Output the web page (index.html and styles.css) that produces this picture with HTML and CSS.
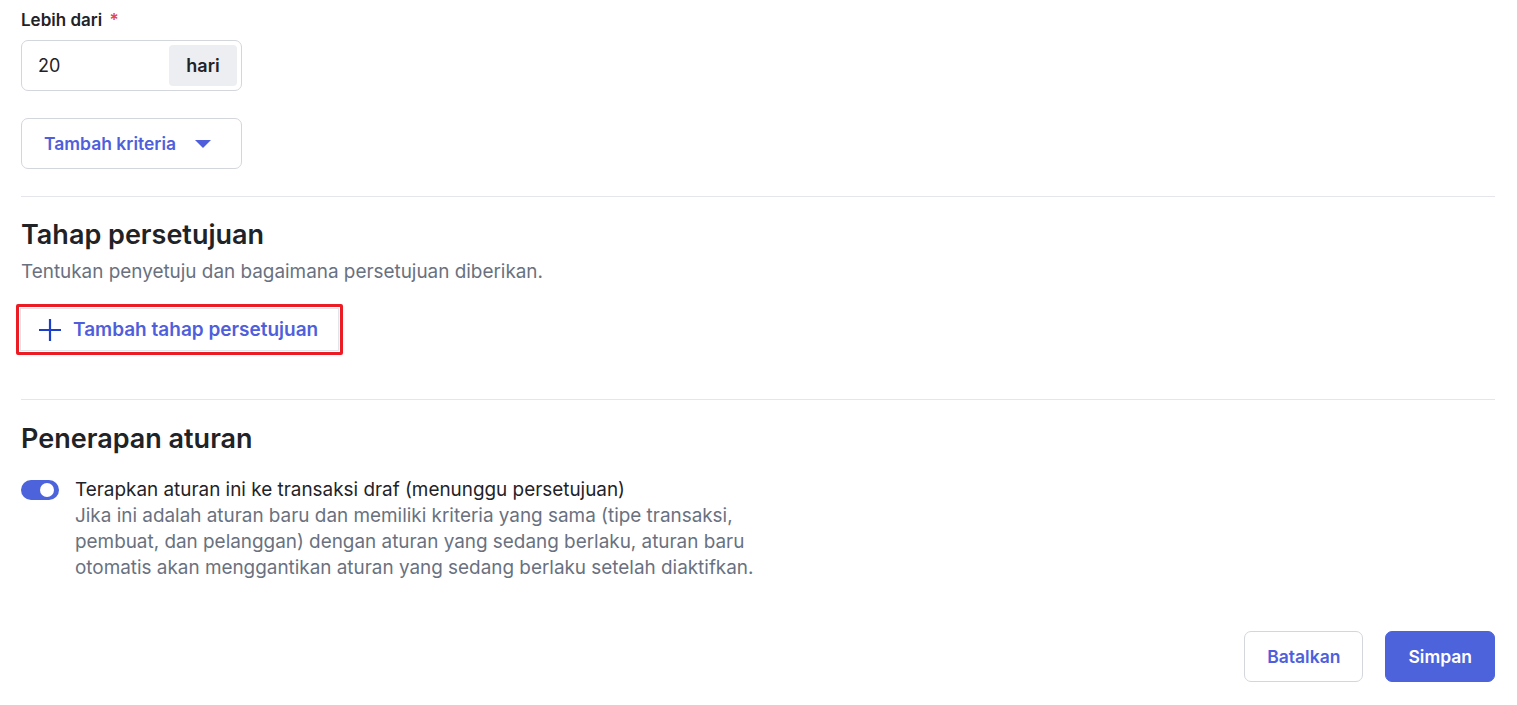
FILE: index.html
```html
<!DOCTYPE html>
<html lang="id">
<head>
<meta charset="utf-8">
<link rel="stylesheet" href="styles.css">
</head>
<body>
<div class="page">
  <section class="criteria">
    <label class="field-label">Lebih dari <span class="req">*</span></label>
    <div class="input-group">
      <span class="input-value">20</span>
      <span class="input-suffix">hari</span>
    </div>
    <button class="dropdown-btn">Tambah kriteria
      <svg class="caret" width="18" height="10" viewBox="0 0 18 10"><path d="M1 1h16L9 9z" fill="#4f5fdc"/></svg>
    </button>
  </section>

  <hr class="divider">

  <section class="stage">
    <h2 class="section-title">Tahap persetujuan</h2>
    <p class="section-desc">Tentukan penyetuju dan bagaimana persetujuan diberikan.</p>
    <div class="highlight">
      <button class="add-btn">
        <svg width="24" height="24" viewBox="0 0 24 24"><path d="M12 1v22M1 12h22" stroke="#1b3fc9" stroke-width="2.2" fill="none"/></svg>
        <span>Tambah tahap persetujuan</span>
      </button>
    </div>
  </section>

  <hr class="divider second">

  <section class="apply">
    <h2 class="section-title">Penerapan aturan</h2>
    <div class="toggle-row">
      <span class="toggle"><span class="knob"></span></span>
      <div class="toggle-text">
        <div class="toggle-label">Terapkan aturan ini ke transaksi draf (menunggu persetujuan)</div>
        <div class="toggle-help">Jika ini adalah aturan baru dan memiliki kriteria yang sama (tipe transaksi, pembuat, dan pelanggan) dengan aturan yang sedang berlaku, aturan baru otomatis akan menggantikan aturan yang sedang berlaku setelah diaktifkan.</div>
      </div>
    </div>
  </section>

  <div class="actions">
    <button class="btn btn-outline">Batalkan</button>
    <button class="btn btn-primary">Simpan</button>
  </div>
</div>
</body>
</html>
```

FILE: styles.css
```css
* { box-sizing: border-box; }
html, body { margin: 0; padding: 0; background: #fff; }
body {
  font-family: Inter, "Noto Sans", sans-serif;
  color: #1f2328;
}
.page {
  width: 1517px;
  padding: 10px 22px 0 21px;
}
.criteria { display: flex; flex-direction: column; align-items: flex-start; }
.field-label {
  font-size: 17px;
  font-weight: 600;
  line-height: 20px;
  color: #1f2328;
}
.req { color: #e5484d; margin-left: 3px; }
.input-group {
  margin-top: 10px;
  width: 221px;
  height: 51px;
  border: 1px solid #d3d6dd;
  border-radius: 7px;
  display: flex;
  align-items: stretch;
  padding: 4px 4px 4px 16px;
}
.input-value {
  flex: 1;
  display: flex;
  align-items: center;
  font-size: 18px;
  color: #1f2328;
}
.input-suffix {
  width: 68px;
  background: #eceef1;
  border-radius: 4px;
  display: flex;
  align-items: center;
  justify-content: center;
  font-size: 18px;
  font-weight: 600;
  color: #1f2328;
}
.dropdown-btn {
  margin-top: 27px;
  width: 221px;
  height: 51px;
  border: 1px solid #d3d6dd;
  border-radius: 7px;
  background: #fff;
  display: flex;
  align-items: center;
  gap: 18px;
  padding: 0 0 0 22px;
  font-family: inherit;
  font-size: 17.5px;
  font-weight: 600;
  color: #4f5fdc;
}
.caret { margin-top: 1px; }
.divider {
  border: 0;
  border-top: 1px solid #e4e6eb;
  margin: 27px 0 0 0;
}
.divider.second { margin-top: 44px; }
.section-title {
  margin: 0;
  font-size: 27px;
  font-weight: 600;
  line-height: 34px;
  color: #1f2328;
}
.stage { padding-top: 21px; }
.section-desc {
  margin: 8px 0 0;
  font-size: 18.9px;
  line-height: 24px;
  color: #697180;
}
.highlight {
  margin: 20px 0 0 -5px;
  width: 327px;
  height: 51px;
  border: 3px solid #ec1c24;
  border-radius: 2px;
  padding: 1px;
}
.add-btn {
  width: 100%;
  height: 100%;
  border: 1px solid #e2e4e8;
  background: #fff;
  display: flex;
  align-items: center;
  gap: 11px;
  padding: 0 0 0 17px;
  font-family: inherit;
  font-size: 19px;
  font-weight: 600;
  color: #4f5fdc;
}
.apply { padding-top: 22px; }
.toggle-row {
  margin-top: 21px;
  display: flex;
  gap: 16px;
  align-items: flex-start;
}
.toggle {
  margin-top: 3px;
  width: 38px;
  height: 20px;
  border-radius: 10px;
  background: #4c63dc;
  display: flex;
  align-items: center;
  justify-content: flex-end;
  padding-right: 5px;
  flex-shrink: 0;
}
.knob {
  width: 14px;
  height: 14px;
  border-radius: 50%;
  background: #fff;
}
.toggle-text { width: 690px; }
.toggle-label {
  font-size: 18.9px;
  line-height: 26px;
  color: #1f2328;
}
.toggle-help {
  font-size: 18.9px;
  line-height: 26px;
  color: #697180;
}
.actions {
  margin-top: 50px;
  display: flex;
  justify-content: flex-end;
  gap: 22px;
}
.btn {
  height: 51px;
  border-radius: 7px;
  font-family: inherit;
  font-size: 17.5px;
  font-weight: 600;
  padding: 0 22px;
}
.btn-outline {
  background: #fff;
  border: 1px solid #d3d6dd;
  color: #4f5fdc;
}
.btn-primary {
  background: #4c63dc;
  border: 1px solid #4c63dc;
  color: #fff;
}
```
